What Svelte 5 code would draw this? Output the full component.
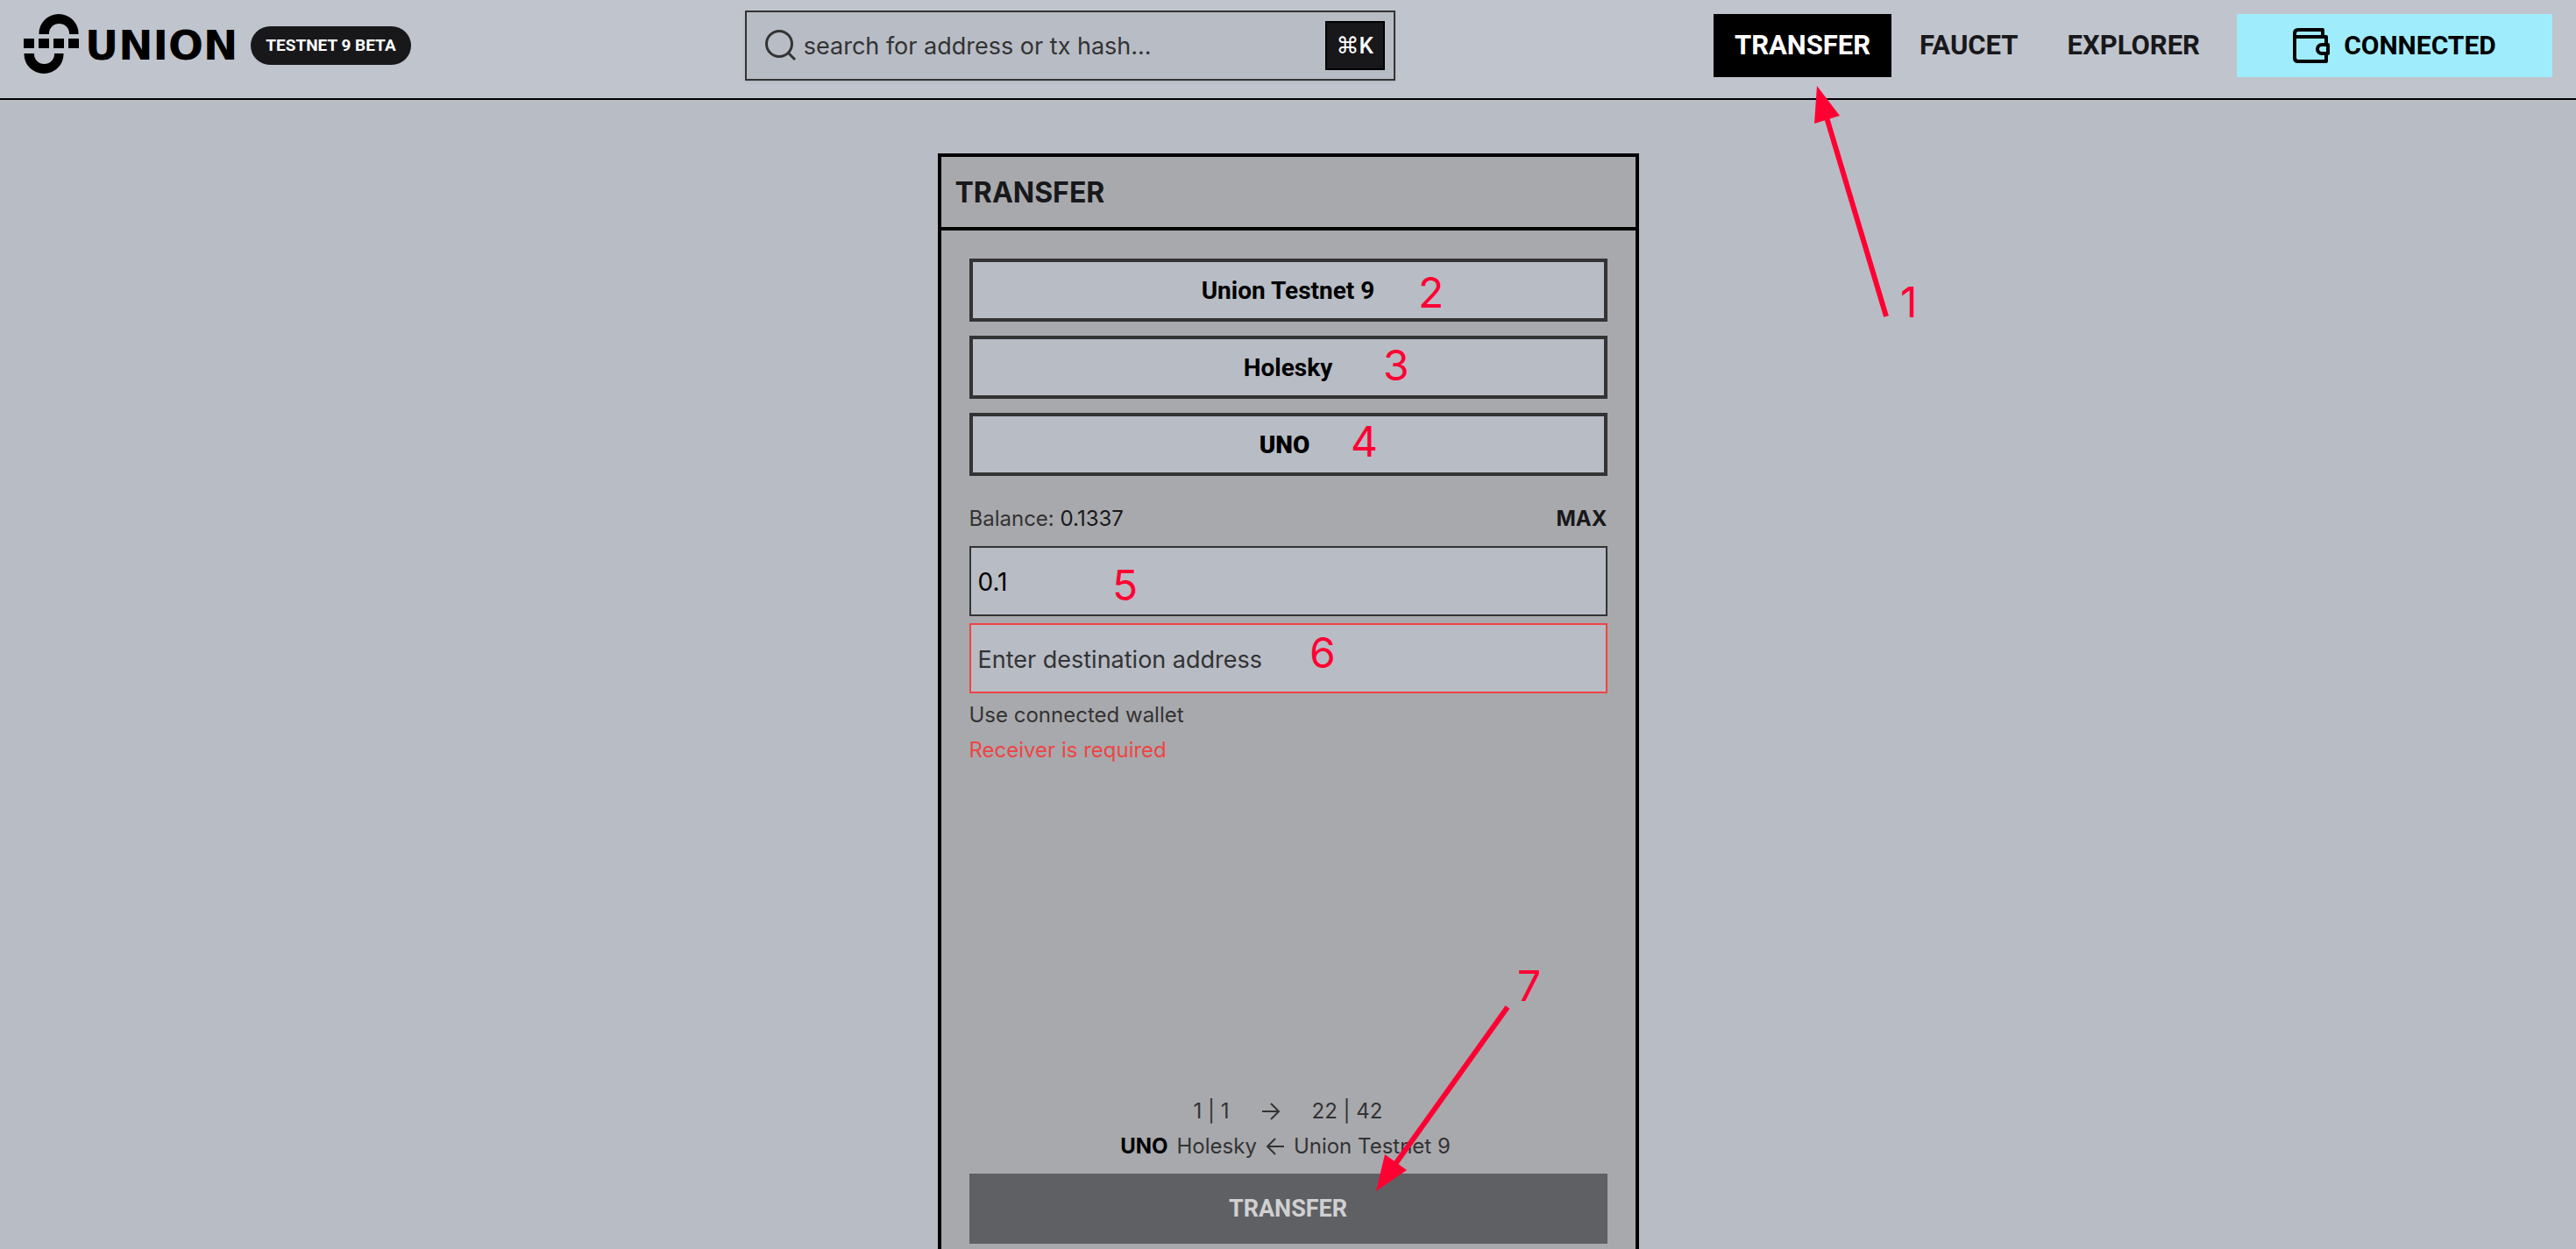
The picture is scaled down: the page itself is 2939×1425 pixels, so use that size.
<script>
  let query = $state('');
  let amount = $state('0.1');
  let receiver = $state('');
</script>

<div class="page">
  <header>
    <div class="brand">
      <a class="logo" href="/" aria-label="Union home">
        <svg width="63" height="72" viewBox="0 0 63 72" aria-hidden="true">
          <path d="M17.500 23V22a22.500 22 0 0 1 45 0V23H52V22a11.500 11 0 0 0-23 0V23ZM.5 45V46a22.500 22 0 0 0 45 0V45H35V46a11.500 11 0 0 1-23 0V45Z" />
          <path d="M0 28H12V39H0ZM17 28H29V39H17ZM34 28H46V39H34ZM51 28H63V39H51Z" />
        </svg>
        <span>UNION</span>
      </a>
      <span class="badge">TESTNET 9 BETA</span>
    </div>

    <label class="search">
      <svg width="36" height="36" viewBox="0 0 36 36" aria-hidden="true">
        <circle cx="16" cy="16" r="14.500" />
        <path d="M26 26L34 34" />
      </svg>
      <input type="search" aria-label="Search" placeholder="search for address or tx hash..." bind:value={query} />
      <kbd>⌘K</kbd>
    </label>

    <nav>
      <a class="active" href="#transfer">TRANSFER
        <svg class="mark" width="260" height="360" aria-hidden="true">
          <path class="shaft" d="M197 345L129 118" />
          <path class="head" d="M118 82L115 125L144 116Z" />
          <text x="213" y="346">1</text>
        </svg>
      </a>
      <a href="#faucet">FAUCET</a>
      <a href="#explorer">EXPLORER</a>
      <button class="wallet" type="button">
        <svg width="42" height="40" viewBox="0 0 42 40" aria-hidden="true">
          <path d="M34 10V2H6Q2 2 2 6V34Q2 38 6 38H38V29M2 10H38V19" />
          <path d="M40 19H33a5 5 0 0 0 0 10H40Z" />
        </svg>
        CONNECTED
      </button>
    </nav>
  </header>

  <main>
    <section class="card">
      <h1>TRANSFER</h1>
      <form onsubmit={(e) => e.preventDefault()}>
        <div class="fields">
          <div class="pickers">
            <button type="button">Union Testnet 9</button>
            <button type="button">Holesky</button>
            <button type="button" class="asset">UNO</button>
          </div>
          <div class="balance">
            <span>Balance: <b>0.1337</b></span>
            <button type="button">MAX</button>
          </div>
          <div class="inputs">
            <input aria-label="Amount" bind:value={amount} />
            <input class="invalid" aria-label="Destination address" placeholder="Enter destination address" bind:value={receiver} />
          </div>
          <button class="link" type="button">Use connected wallet</button>
          <p class="error">Receiver is required</p>
        </div>

        <div class="summary">
          <p class="route">
            <span>1 | 1</span>
            <svg width="22" height="22" viewBox="0 0 22 22" aria-hidden="true"><path d="M1 11H20M11 2L20 11L11 20" /></svg>
            <span>22 | 42</span>
          </p>
          <p class="chains">
            <strong>UNO</strong>
            <span>Holesky</span>
            <svg width="22" height="22" viewBox="0 0 22 22" aria-hidden="true"><path d="M21 11H2M11 2L2 11L11 20" /></svg>
            <span>Union Testnet 9</span>
          </p>
          <button class="submit" type="submit">TRANSFER</button>
        </div>
      </form>
      <svg class="mark" width="792" height="1246" aria-hidden="true">
        <text x="544" y="172">2</text>
        <text x="504" y="255">3</text>
        <text x="467" y="342">4</text>
        <text x="195" y="506">5</text>
        <text x="420" y="583">6</text>
        <text x="657" y="963">7</text>
        <path class="shaft" d="M646 970L518 1149" />
        <path class="head" d="M496 1180L506 1138L531 1156Z" />
      </svg>
    </section>
  </main>
</div>

<style>
  :global(body) {
    background: #b8bcc5;
  }
  .page {
    height: 100vh;
    overflow: hidden;
    color: #18181b;
    font-family: Inter, 'Liberation Sans', sans-serif;
    font-size: 24px;
    line-height: 40px;
  }
  .page * {
    box-sizing: border-box;
  }
  button,
  input {
    margin: 0;
    padding: 0;
    border: 0;
    border-radius: 0;
    background: none;
    color: inherit;
    font: inherit;
    outline: 0;
  }
  p,
  h1 {
    margin: 0;
  }
  header {
    display: flex;
    align-items: center;
    justify-content: space-between;
    height: 114px;
    padding: 0 27px 8px;
    background: #c0c4cd;
    border-bottom: 2px solid #000;
  }
  .brand {
    display: flex;
    align-items: center;
    gap: 15px;
    padding-right: 18px;
  }
  .logo {
    display: flex;
    align-items: center;
    gap: 7px;
    color: #000;
    font-family: 'DejaVu Sans', sans-serif;
    font-size: 47px;
    font-weight: 700;
    text-decoration: none;
  }
  .badge {
    padding: 0 17px;
    border-radius: 22px;
    background: #18181b;
    color: #fff;
    font-family: Roboto, sans-serif;
    font-size: 19px;
    font-weight: 700;
    line-height: 44px;
  }
  .search {
    display: flex;
    align-items: center;
    gap: 8px;
    width: 742px;
    height: 80px;
    padding: 0 10px 0 21px;
    border: 2px solid #333;
    background: #b8bcc5;
    box-shadow: 0 2px 4px #0001;
  }
  .search input {
    flex: 1;
    min-width: 0;
    padding-top: 2px;
    font-size: 27px;
  }
  input::placeholder {
    color: #333;
    opacity: 1;
  }
  kbd {
    width: 68px;
    border: 2px solid #000;
    background: #18181b;
    color: #fff;
    font-family: Roboto, 'DejaVu Sans', sans-serif;
    font-size: 26px;
    font-weight: 500;
    line-height: 52px;
    text-align: center;
  }
  svg {
    flex: none;
    fill: none;
    stroke: #333;
    stroke-width: 3px;
  }
  .logo svg {
    fill: #000;
    stroke: none;
  }
  nav {
    display: flex;
    gap: 8px;
    font-family: Roboto, sans-serif;
    font-size: 31px;
    font-weight: 700;
    line-height: 72px;
  }
  nav a {
    position: relative;
    padding: 0 24px;
    color: #18181b;
    text-decoration: none;
  }
  nav .active {
    background: #000;
    color: #fff;
  }
  .wallet {
    display: flex;
    align-items: center;
    justify-content: center;
    gap: 16px;
    width: 360px;
    margin-left: 10px;
    background: #9fecfc;
    color: #000;
    font-size: 30px;
  }
  .wallet svg {
    stroke: #000;
    stroke-width: 4px;
    stroke-linejoin: round;
  }
  .mark {
    position: absolute;
    top: 0;
    left: 0;
    overflow: visible;
    pointer-events: none;
  }
  .mark text {
    fill: #ff0033;
    stroke: none;
    font-family: Inter, sans-serif;
    font-size: 48px;
    font-weight: 400;
  }
  .shaft {
    stroke: #ff0033;
    stroke-width: 6px;
  }
  .head {
    fill: #ff0033;
    stroke: none;
  }
  main {
    display: flex;
    justify-content: center;
    padding-top: 61px;
  }
  .card {
    position: relative;
    display: flex;
    flex-direction: column;
    width: 800px;
    min-height: 1280px;
    border: 4px solid #000;
    background: #a8a9ac;
  }
  h1 {
    padding: 2px 16px 0;
    border-bottom: 4px solid #000;
    font-size: 32px;
    line-height: 78px;
  }
  form {
    display: flex;
    flex: 1;
    flex-direction: column;
    justify-content: space-between;
    padding: 32px;
    color: #333;
  }
  .pickers {
    display: grid;
    gap: 16px;
  }
  .pickers button {
    padding-top: 2px;
    border: 4px solid #333;
    background: #b8bcc5;
    color: #000;
    font-family: Roboto, sans-serif;
    font-size: 28px;
    font-weight: 700;
    line-height: 62px;
  }
  .pickers .asset {
    padding-right: 8px;
    font-weight: 900;
  }
  .balance {
    display: flex;
    justify-content: space-between;
    padding: 29px 0 11px;
  }
  .balance b {
    color: #18181b;
    font-weight: 400;
  }
  .balance button {
    color: #18181b;
    font-weight: 700;
  }
  .inputs {
    display: grid;
    gap: 8px;
    margin-bottom: 5px;
  }
  .inputs input {
    height: 80px;
    padding: 2px 8px 0;
    border: 2px solid #333;
    background: #b8bcc5;
    color: #000;
    font-size: 28px;
  }
  .inputs .invalid {
    border-color: #ef4444;
    font-size: 27px;
  }
  .link {
    display: block;
  }
  .error {
    color: #ef4444;
  }
  .route,
  .chains {
    display: flex;
    align-items: center;
    justify-content: center;
  }
  .summary svg {
    stroke-width: 2px;
  }
  .route {
    gap: 36px;
  }
  .chains {
    gap: 10px;
    padding-right: 6px;
  }
  strong {
    color: #000;
  }
  .submit {
    width: 100%;
    margin-top: 11px;
    background: #5f6064;
    color: #d0d0d1;
    font-family: Roboto, sans-serif;
    font-size: 27px;
    font-weight: 700;
    line-height: 80px;
  }
</style>
